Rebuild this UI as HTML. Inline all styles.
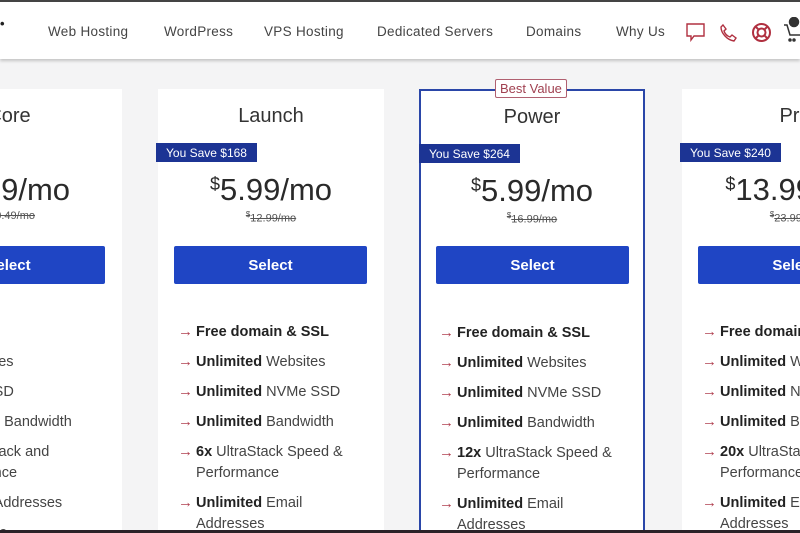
<!DOCTYPE html>
<html style="width:800px;height:533px;overflow:hidden"><head><meta charset="utf-8"><style>
*{margin:0;padding:0;box-sizing:border-box}
body{width:800px;height:533px;overflow:hidden;background:#f4f4f5;font-family:"Liberation Sans",sans-serif;position:relative;color:#222}
.hdr{position:absolute;left:0;top:0;width:800px;height:59px;background:#fff;border-top:2px solid #444;box-shadow:0 2px 3px rgba(0,0,0,.2);z-index:5}
.nav{position:absolute;top:22px;font-size:13.5px;color:#444;letter-spacing:.3px}
.card{position:absolute;top:89px;width:226px;height:444px;background:#fff;overflow:visible}
.title{position:absolute;top:16px;width:100%;text-align:center;font-size:20px;color:#333}
.save{position:absolute;top:54px;left:-2px;background:#1c3494;color:#fff;font-size:12px;padding:3px 10px;height:19px;white-space:nowrap}
.price{position:absolute;top:83px;width:100%;text-align:center;font-size:31px;color:#2a2a2a;white-space:nowrap}
.price sup{font-size:18px;vertical-align:top;position:relative;top:2px}
.old{position:absolute;top:121px;width:100%;text-align:center;font-size:11px;color:#555;text-decoration:line-through;white-space:nowrap}
.btn{position:absolute;top:157px;left:16px;width:193px;height:38px;background:#1f45c4;color:#fff;font-size:15px;font-weight:bold;text-align:center;line-height:40px;border-radius:2px}
ul{position:absolute;top:233px;left:20px;list-style:none;width:200px}
li{font-size:14.5px;line-height:21px;margin-bottom:9px;padding-left:18px;position:relative;color:#444;white-space:nowrap}
li:before{content:"→";position:absolute;left:0;top:-1px;color:#b04050;font-size:15px}
li b{color:#222}
li.e:before{content:""}
</style></head><body>
<div class="hdr">
<div style="position:absolute;left:0;top:14px;font-size:13px;font-weight:bold">•</div>
<div class="nav" style="left:48px">Web Hosting</div>
<div class="nav" style="left:164px">WordPress</div>
<div class="nav" style="left:264px">VPS Hosting</div>
<div class="nav" style="left:377px">Dedicated Servers</div>
<div class="nav" style="left:526px">Domains</div>
<div class="nav" style="left:616px">Why Us</div>
<svg style="position:absolute;left:686px;top:21px" width="20" height="20" viewBox="0 0 20 20" fill="none" stroke="#b03040" stroke-width="1.4"><path d="M1 1h17v12H8l-3 4v-4H1z"/></svg>
<svg style="position:absolute;left:719px;top:21px" width="20" height="20" viewBox="0 0 20 20" fill="none" stroke="#b03040" stroke-width="1.4"><path d="M4 2l3 4-2 2c1 3 3 5 6 6l2-2 4 3-2 3C8 17 2 10 2 4z"/></svg>
<svg style="position:absolute;left:751px;top:20px" width="21" height="21" viewBox="0 0 21 21" fill="none" stroke="#b03040" stroke-width="2"><circle cx="10.5" cy="10.5" r="8.5"/><circle cx="10.5" cy="10.5" r="4"/><path d="M4.5 4.5l3 3M16.5 4.5l-3 3M4.5 16.5l3-3M16.5 16.5l-3-3"/></svg>
<svg style="position:absolute;left:784px;top:15px" width="16" height="28" viewBox="0 0 16 28" fill="none" stroke="#333" stroke-width="1.5"><path d="M0 8h3l3 10h10"/><circle cx="10" cy="5" r="4.5" fill="#333"/><circle cx="6" cy="23" r="1" fill="#333"/><circle cx="10" cy="23" r="1" fill="#333"/></svg>
</div>

<div class="card" style="left:0;width:122px;overflow:hidden">
<div style="position:absolute;left:-104px;top:0;width:226px;height:444px">
<div class="title">Core</div>
<div class="price"><sup>$</sup>2.99/mo</div>
<div class="old">$10.49/mo</div>
<div class="btn">Select</div>
<ul><li class="e">&nbsp;</li><li><b>10</b> Websites</li><li><b>100GB</b> SSD</li><li><b>Unlimited</b> Bandwidth</li><li><b>2x</b> UltraStack and<br>Performance</li><li><b>10</b> Email Addresses</li><li>Email Suite</li></ul>
</div>
</div>

<div class="card" style="left:158px">
<div class="title">Launch</div>
<div class="save">You Save $168</div>
<div class="price"><sup>$</sup>5.99/mo</div>
<div class="old"><sup style="font-size:8px">$</sup>12.99/mo</div>
<div class="btn">Select</div>
<ul><li><b>Free domain &amp; SSL</b></li><li><b>Unlimited</b> Websites</li><li><b>Unlimited</b> NVMe SSD</li><li><b>Unlimited</b> Bandwidth</li><li><b>6x</b> UltraStack Speed &amp;<br>Performance</li><li><b>Unlimited</b> Email<br>Addresses</li></ul>
</div>

<div class="card" style="left:419px;top:89px;border:2px solid #2a46a8">
<div style="position:absolute;top:-12px;left:74px;background:#fff;border:1px solid #b06070;color:#a04050;font-size:13px;padding:1px 4px;border-radius:2px">Best Value</div>
<div class="title" style="top:15px">Power</div>
<div class="save" style="left:-2px;top:53px">You Save $264</div>
<div class="price" style="top:82px"><sup>$</sup>5.99/mo</div>
<div class="old" style="top:120px"><sup style="font-size:8px">$</sup>16.99/mo</div>
<div class="btn" style="left:15px;top:155px">Select</div>
<ul style="left:18px;top:232px"><li><b>Free domain &amp; SSL</b></li><li><b>Unlimited</b> Websites</li><li><b>Unlimited</b> NVMe SSD</li><li><b>Unlimited</b> Bandwidth</li><li><b>12x</b> UltraStack Speed &amp;<br>Performance</li><li><b>Unlimited</b> Email<br>Addresses</li></ul>
</div>

<div class="card" style="left:682px;width:118px;overflow:hidden">
<div style="position:absolute;left:0;top:0;width:226px;height:444px">
<div class="title">Pro</div>
<div class="price"><sup>$</sup>13.99/mo</div>
<div class="old"><sup style="font-size:8px">$</sup>23.99/mo</div>
<div class="btn">Select</div>
<ul><li><b>Free domain &amp; SSL</b></li><li><b>Unlimited</b> Websites</li><li><b>Unlimited</b> NVMe SSD</li><li><b>Unlimited</b> Bandwidth</li><li><b>20x</b> UltraStack Speed &amp;<br>Performance</li><li><b>Unlimited</b> Email<br>Addresses</li></ul>
</div>
</div>
<div class="save" style="left:680px;top:143px">You Save $240</div>
<div style="position:absolute;left:0;top:530px;width:800px;height:3px;background:#2a2228;z-index:6"></div>
</body></html>
